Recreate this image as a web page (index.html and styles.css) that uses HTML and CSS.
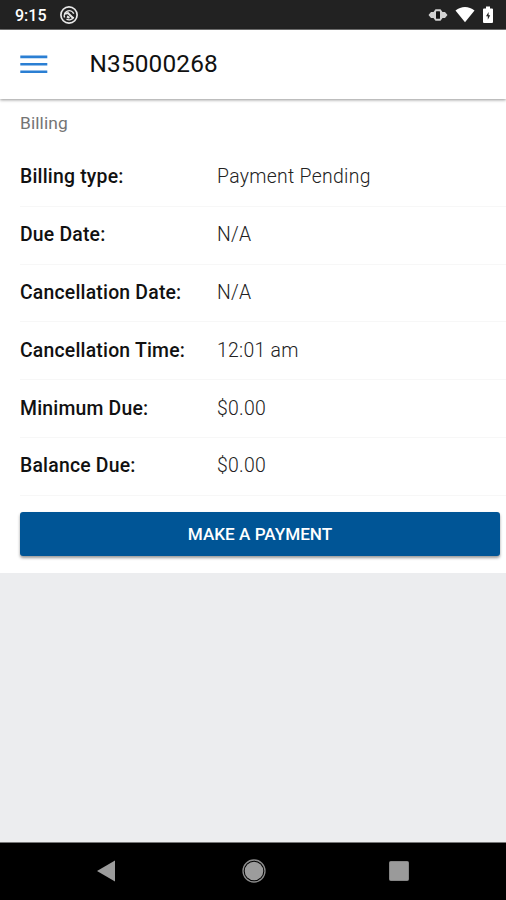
FILE: index.html
```html
<!DOCTYPE html>
<html lang="en">
<head>
<meta charset="utf-8">
<title>Billing</title>
<link rel="stylesheet" href="styles.css">
</head>
<body>
<div class="app">
  <div class="status">
    <span class="clock">9:15</span>
    <svg class="notify" width="20" height="20" viewBox="0 0 20 20" fill="none" stroke="#e8e8e8">
      <circle cx="10" cy="10" r="8.1" stroke-width="1.7"/>
      <path d="M5.600 12.500A5 5 0 0 1 14.800 8.600M14.600 12A5 5 0 0 1 7.500 14.200" stroke-width="1.4"/>
      <path d="M5.500 8.800 9 8 14.500 13.500M8 11.500 10.500 12.800" stroke-width="2"/>
    </svg>
    <div class="indicators">
      <svg width="20" height="16" viewBox="0 0 20 16">
        <path d="M.5 8 3 5h2.500l2-2.800h5l2 2.800H17l2.500 3-2.500 3h-2.500l-2 2.800h-5l-2-2.800H3z" fill="#d2d2d2"/>
        <rect x="8" y="4.200" width="4" height="7.600" rx=".5" fill="#151515"/>
      </svg>
      <svg width="20" height="17" viewBox="0 0 20 17"><path d="M.5 4.500C6-.2 14-.2 19.500 4.500L10 16.300z" fill="#fff"/></svg>
      <svg width="12" height="18" viewBox="0 0 12 18">
        <path d="M4 .5h4v2h2q1 0 1 1v12.500q0 1-1 1H2q-1 0-1-1V3.500q0-1 1-1h2z" fill="#fff"/>
        <path d="M6.600 6 4 10.300h1.800v3.500l2.400-4.500H6.600z" fill="#222"/>
      </svg>
    </div>
  </div>
  <header class="toolbar">
    <svg class="menu" width="28" height="20" viewBox="0 0 28 20" stroke="#2b7fd3" stroke-width="2.600"><path d="M.3 2.900h27M.3 10.300h27M.3 17.700h27"/></svg>
    <h1>N35000268</h1>
  </header>
  <main class="billing">
    <h2>Billing</h2>
    <dl>
      <div class="row"><dt>Billing type:</dt><dd>Payment Pending</dd></div>
      <div class="row"><dt>Due Date:</dt><dd>N/A</dd></div>
      <div class="row"><dt>Cancellation Date:</dt><dd>N/A</dd></div>
      <div class="row"><dt>Cancellation Time:</dt><dd>12:01 am</dd></div>
      <div class="row"><dt>Minimum Due:</dt><dd>$0.00</dd></div>
      <div class="row"><dt>Balance Due:</dt><dd>$0.00</dd></div>
    </dl>
    <button class="pay">MAKE A PAYMENT</button>
  </main>
  <nav class="navbar">
    <svg width="18" height="22" viewBox="0 0 18 22"><path d="M0 11 18 .5v21z" fill="#9c9c9c"/></svg>
    <svg width="24" height="24" viewBox="0 0 24 24"><circle cx="12" cy="12" r="11" fill="none" stroke="#8c8c8c" stroke-width="1.300"/><circle cx="12" cy="12" r="9.300" fill="#9c9c9c"/></svg>
    <svg width="20" height="20" viewBox="0 0 20 20"><rect x=".5" y=".5" width="19" height="19" rx="1" fill="#9a9a9a" stroke="#868686"/></svg>
  </nav>
</div>
</body>
</html>
```
FILE: styles.css
```css
* { box-sizing: border-box; margin: 0; padding: 0; }
body { font-family: Roboto, "Liberation Sans", sans-serif; background: #ecedef; }
.app { width: 506px; height: 900px; display: flex; flex-direction: column; overflow: hidden; }
.status { height: 30px; flex: none; display: flex; align-items: center; background: #222; border-bottom: 1px solid #747474; padding: 0 12px 0 15px; }
.clock { width: 44px; color: #fff; font-size: 16px; font-weight: 500; line-height: 20px; padding-top: 2px; }
.indicators { margin-left: auto; display: flex; align-items: center; gap: 7px; }
.toolbar { height: 69px; flex: none; display: flex; align-items: center; padding: 0 0 1px 20px; background: #fff; box-shadow: 0 1px 3px rgba(0,0,0,.42); z-index: 1; }
.menu { margin-right: 41.500px; }
h1 { font-size: 24.400px; font-weight: 400; letter-spacing: .15px; color: #111; line-height: 30px; }
.billing { flex: none; height: 474px; background: #fff; padding: 0 0 0 20px; }
h2 { height: 50px; line-height: 48px; font-size: 17.400px; font-weight: 400; letter-spacing: .1px; color: #747474; }
.row { height: 57.800px; display: flex; align-items: center; border-bottom: 1px solid #f7f7f7; font-size: 19.400px; line-height: 24px; letter-spacing: .2px; color: #111; }
dt { width: 197px; font-weight: 500; }
dd { font-weight: 300; letter-spacing: .3px; color: #222; }
.pay { display: block; width: 480px; height: 44px; margin-top: 16px; border: 0; border-radius: 3px; background: #005596; color: #fff; font: 500 17.150px/44px Roboto, sans-serif; box-shadow: 0 2px 3px rgba(0,0,0,.4); }
.navbar { height: 58px; flex: none; margin-top: auto; display: flex; align-items: center; justify-content: space-between; padding: 0 97px 2px; background: #000; border-top: 1px solid #777; }
.navbar svg:nth-child(2) { margin-left: 3px; }
```
